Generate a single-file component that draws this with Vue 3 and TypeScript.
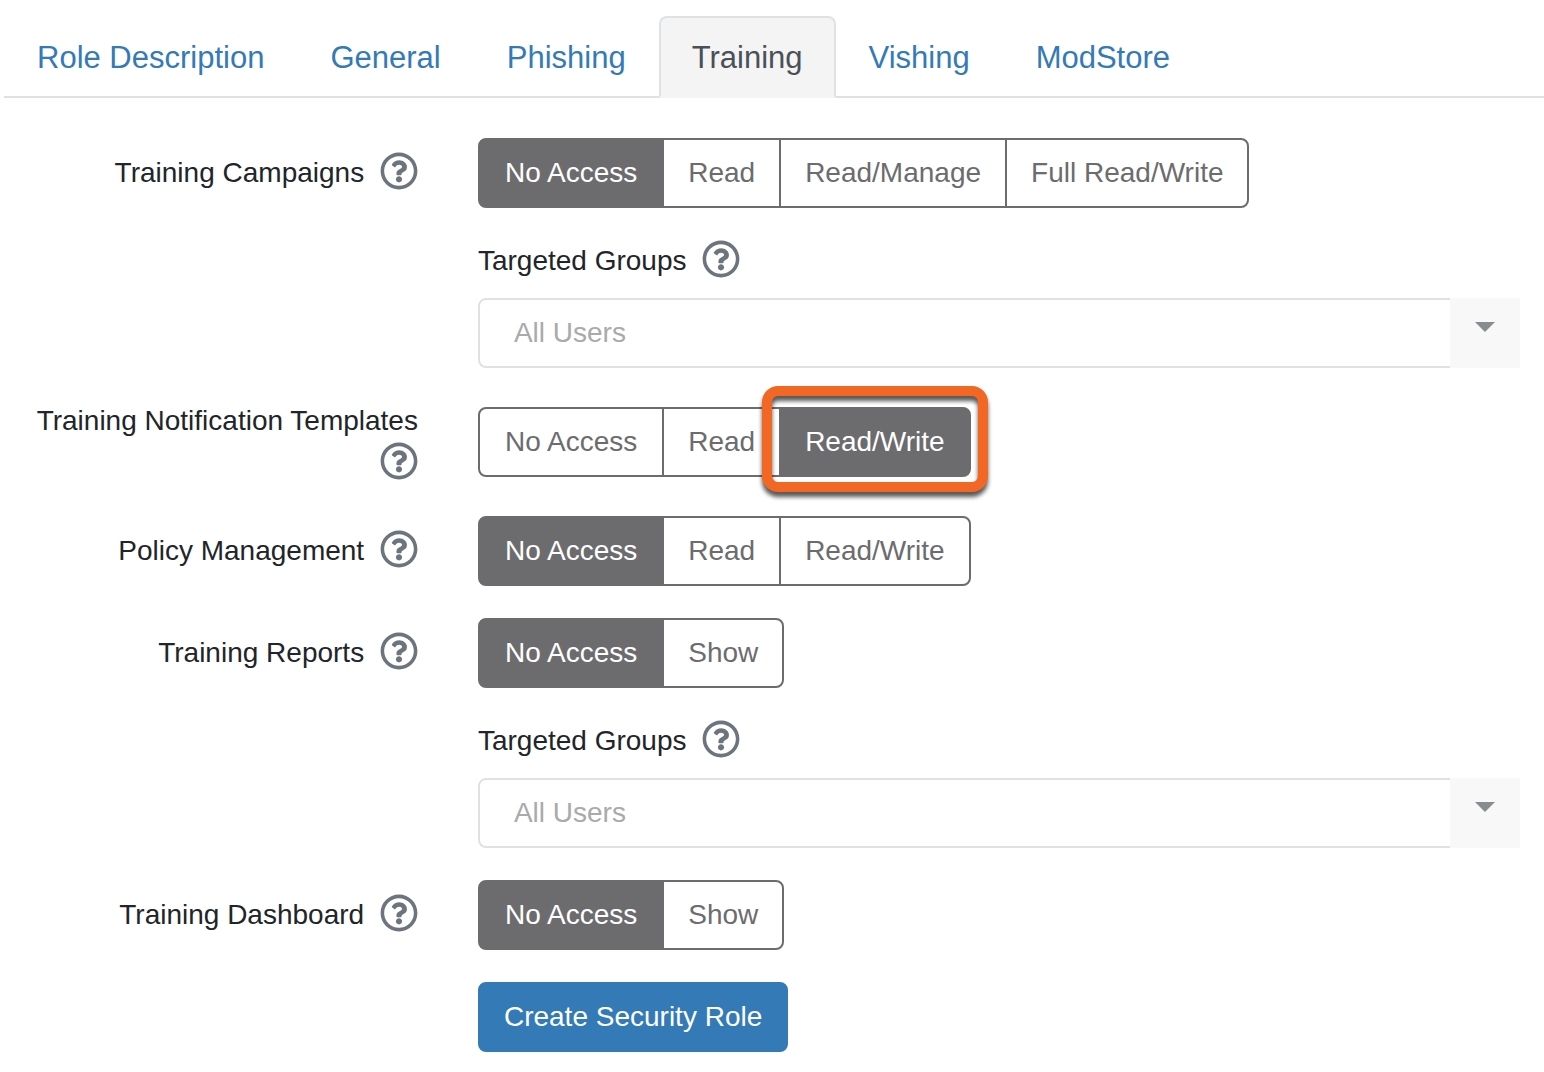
<script setup lang="ts">
import { ref, reactive } from 'vue'

interface Permission {
  id: string
  label: string
  options: string[]
  highlight?: string
  targeted?: boolean
}

const tabs = ['Role Description', 'General', 'Phishing', 'Training', 'Vishing', 'ModStore']
const activeTab = ref('Training')

const permissions: Permission[] = [
  {
    id: 'campaigns',
    label: 'Training Campaigns',
    options: ['No Access', 'Read', 'Read/Manage', 'Full Read/Write'],
    targeted: true,
  },
  {
    id: 'templates',
    label: 'Training Notification Templates',
    options: ['No Access', 'Read', 'Read/Write'],
    highlight: 'Read/Write',
  },
  { id: 'policy', label: 'Policy Management', options: ['No Access', 'Read', 'Read/Write'] },
  { id: 'reports', label: 'Training Reports', options: ['No Access', 'Show'], targeted: true },
  { id: 'dashboard', label: 'Training Dashboard', options: ['No Access', 'Show'] },
]

const selected = reactive<Record<string, string>>({
  campaigns: 'No Access',
  templates: 'Read/Write',
  policy: 'No Access',
  reports: 'No Access',
  dashboard: 'No Access',
})

const helpPath =
  'M256 8C119.043 8 8 119.083 8 256c0 136.997 111.043 248 248 248s248-111.003 248-248C504 119.083 392.957 8 256 8zm0 448c-110.532 0-200-89.431-200-200 0-110.495 89.472-200 200-200 110.491 0 200 89.471 200 200 0 110.53-89.431 200-200 200zm107.244-255.2c0 67.052-72.421 68.084-72.421 92.863V300c0 6.627-5.373 12-12 12h-45.647c-6.627 0-12-5.373-12-12v-8.659c0-35.745 27.1-50.034 47.579-61.516 17.561-9.845 28.324-16.541 28.324-29.579 0-17.246-21.999-28.693-39.784-28.693-23.189 0-33.894 10.977-48.942 29.969-4.057 5.12-11.46 6.071-16.666 2.124l-27.824-21.098c-5.107-3.872-6.251-11.066-2.644-16.363C184.846 131.491 214.94 112 261.794 112c49.071 0 101.45 38.304 101.45 88.8zM298 368c0 23.159-18.841 42-42 42s-42-18.841-42-42 18.841-42 42-42 42 18.841 42 42z'
</script>

<template>
  <main class="page">
    <nav class="tabs">
      <a
        v-for="tab in tabs"
        :key="tab"
        href="#"
        class="tab"
        :class="{ active: tab === activeTab }"
        @click.prevent="activeTab = tab"
      >{{ tab }}</a>
    </nav>

    <form class="form" @submit.prevent>
      <template v-for="item in permissions" :key="item.id">
        <div class="row">
          <div class="label">
            <span :id="item.id + '-label'" class="label-text">{{ item.label }}</span>&#32;<button type="button" class="help" :aria-label="'Help: ' + item.label"><svg viewBox="0 0 512 512" aria-hidden="true"><path :d="helpPath" /></svg></button>
          </div>
          <div class="group" role="group" :aria-labelledby="item.id + '-label'">
            <button
              v-for="option in item.options"
              :key="option"
              type="button"
              class="option"
              :class="{ on: selected[item.id] === option, marked: item.highlight === option }"
              :aria-pressed="selected[item.id] === option"
              @click="selected[item.id] = option"
            >{{ option }}</button>
          </div>
        </div>

        <div v-if="item.targeted" class="row">
          <div class="targeted">
            <div class="targeted-label">
              <label :for="item.id + '-groups'">Targeted Groups</label>&#32;<button type="button" class="help" aria-label="Help: Targeted Groups"><svg viewBox="0 0 512 512" aria-hidden="true"><path :d="helpPath" /></svg></button>
            </div>
            <div class="select-wrap">
              <select :id="item.id + '-groups'" class="select">
                <option>All Users</option>
              </select>
              <span class="arrow" aria-hidden="true"></span>
            </div>
          </div>
        </div>
      </template>

      <div class="row">
        <button type="submit" class="submit">Create Security Role</button>
      </div>
    </form>
  </main>
</template>

<style>
body {
  margin: 0;
  background: #fff;
}
</style>

<style scoped>
.page {
  box-sizing: border-box;
  padding: 16px 0 20px;
  color: #212529;
  font-family: "Liberation Sans", Arial, sans-serif;
  font-size: 28px;
  line-height: 42px;
}

.tabs {
  display: flex;
  margin-left: 4px;
  border-bottom: 2px solid #dee2e6;
}

.tab {
  margin-bottom: -2px;
  padding: 17px 31px 15px;
  border: 2px solid transparent;
  border-radius: 8px 8px 0 0;
  color: #337ab7;
  font-size: 31px;
  line-height: 46px;
  text-decoration: none;
  white-space: nowrap;
}

.tab.active {
  border-color: #dee2e6 #dee2e6 #f4f4f4;
  background: #f4f4f4;
  color: #495057;
}

.form {
  display: flex;
  flex-direction: column;
  gap: 32px;
  padding: 40px 24px 0 34px;
}

.row {
  display: grid;
  grid-template-columns: minmax(0, 7fr) minmax(0, 19fr);
  column-gap: 60px;
  align-items: center;
}

.label {
  text-align: right;
}

.label-text {
  white-space: nowrap;
}

.help {
  display: inline-flex;
  margin: 0 0 0 8px;
  padding: 0;
  border: 0;
  background: none;
  color: #6c757d;
  vertical-align: -8px;
  cursor: pointer;
}

.help svg {
  display: block;
  width: 38px;
  height: 38px;
  fill: currentColor;
}

.group {
  display: flex;
}

.option,
.submit {
  padding: 12px 24px;
  border: 2px solid #6c6c6e;
  background: #fff;
  color: #6c6c6e;
  font: inherit;
  white-space: nowrap;
  cursor: pointer;
}

.option + .option {
  margin-left: -2px;
}

.option:first-child {
  padding: 12px 25px;
  border-radius: 8px 0 0 8px;
}

.option:last-child {
  border-radius: 0 8px 8px 0;
}

.option.on {
  background: #6c6c6e;
  color: #fff;
}

.option.marked {
  position: relative;
}

.option.marked::after {
  content: "";
  position: absolute;
  inset: -23px -19px -17px;
  border: 10px solid #f26724;
  border-radius: 16px;
  filter: drop-shadow(0 5px 2px rgba(0, 0, 0, 0.65));
  pointer-events: none;
}

.targeted,
.submit {
  grid-column: 2;
}

.targeted-label {
  margin-bottom: 16px;
}

.select-wrap {
  position: relative;
}

.select {
  display: block;
  width: 100%;
  height: 70px;
  padding: 0 104px 0 34px;
  border: 2px solid #dee2e6;
  border-radius: 8px;
  appearance: none;
  background: #fff;
  color: #aaa;
  font: inherit;
}

.arrow {
  position: absolute;
  top: 0;
  right: 0;
  bottom: 0;
  display: flex;
  justify-content: center;
  width: 70px;
  background: #f8f8f8;
  pointer-events: none;
}

.arrow::before {
  content: "";
  width: 20px;
  height: 10px;
  margin-top: 24px;
  background: #888c8f;
  clip-path: polygon(0 0, 100% 0, 50% 100%);
}

.submit {
  justify-self: start;
  border-color: #337ab7;
  border-radius: 8px;
  background: #337ab7;
  color: #fff;
}
</style>
